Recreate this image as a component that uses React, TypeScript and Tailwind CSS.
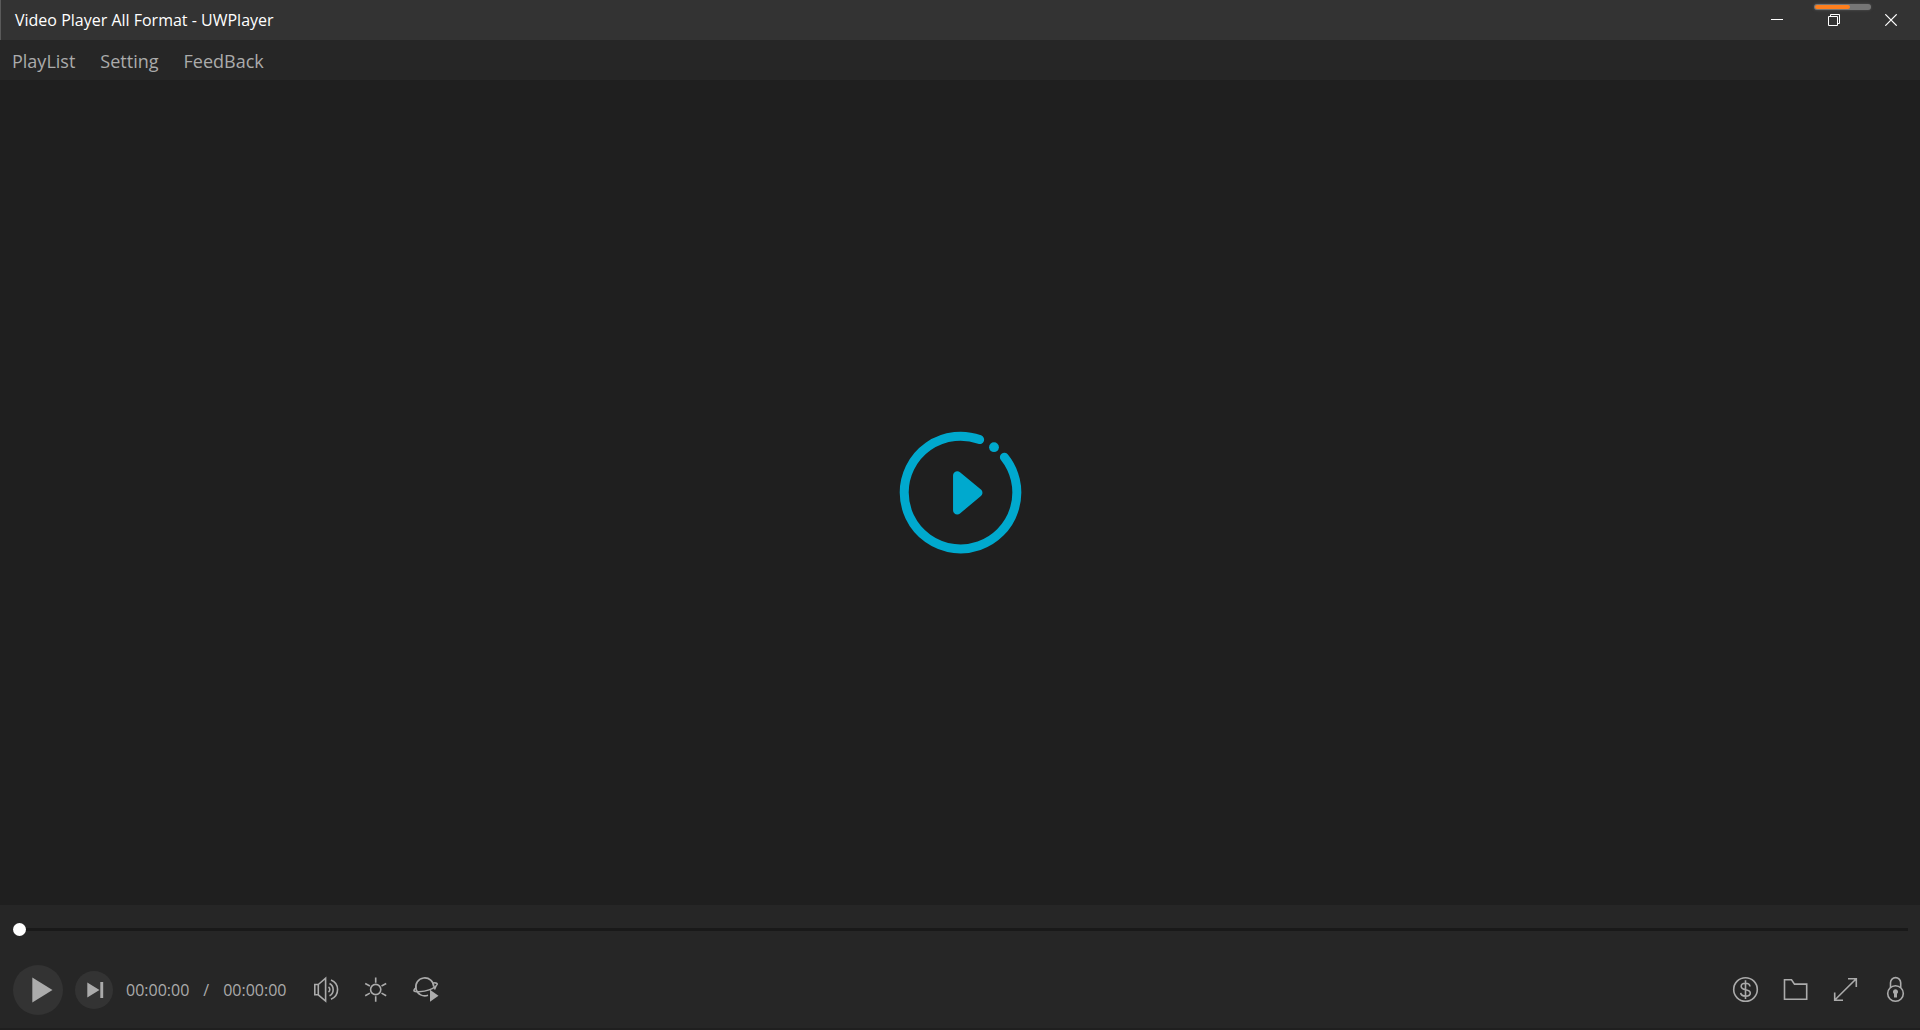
import React from 'react';

interface IconButtonProps {
  label: string;
  children: React.ReactNode;
}

const menuItems = ['PlayList', 'Setting', 'FeedBack'];

const WindowButton: React.FC<IconButtonProps> = ({ label, children }) => (
  <button aria-label={label} className="flex h-10 w-[57px] items-center justify-center text-white hover:bg-white/10">
    <svg width="13" height="12" viewBox="0 0 13 12" fill="none" stroke="currentColor">
      {children}
    </svg>
  </button>
);

const ToolButton: React.FC<IconButtonProps> = ({ label, children }) => (
  <button aria-label={label} className="flex h-[50px] w-[50px] items-center justify-center hover:text-white">
    <svg width="30" height="30" viewBox="0 0 30 30" fill="none" stroke="currentColor" strokeWidth="1.6">
      {children}
    </svg>
  </button>
);

const TitleBar = () => (
  <header className="relative flex h-10 items-center justify-between border-l border-[#5a5a5a] bg-[#333333]">
    <h1 className="pl-[14px] text-base leading-5 text-white">Video Player All Format - UWPlayer</h1>
    <div className="flex">
      <WindowButton label="Minimize">
        <path d="M0 5.5h12" />
      </WindowButton>
      <WindowButton label="Restore">
        <path d="M0.5 2.5h9v9h-9zM2.5 2.5v-2h9v9h-2" />
      </WindowButton>
      <WindowButton label="Close">
        <path d="M0.3 0.3l11.4 11.4M11.7 0.3L0.3 11.7" strokeWidth="1.2" />
      </WindowButton>
    </div>
    {/* Small loading bar floating over the window buttons */}
    <div className="absolute top-1 right-[49px] h-[6px] w-[57px] rounded-full bg-[#767676] p-px shadow-[0_0_3px_#555]">
      <div className="h-1 w-[35px] rounded-full bg-[#ff7f1e]" />
    </div>
  </header>
);

const MenuBar = () => (
  <nav className="flex h-10 items-center gap-[25px] bg-[#262626] px-3 pt-[2px]">
    {menuItems.map((item) => (
      <button key={item} className="text-lg leading-6 text-[#ababab] hover:text-white">
        {item}
      </button>
    ))}
  </nav>
);

const Stage = () => (
  <main className="flex flex-1 items-center justify-center">
    <button aria-label="Open video" className="text-[#00a9ce]">
      <svg width="122" height="121" viewBox="0 0 122 121" fill="none" className="overflow-visible">
        <path
          d="M80.6 7.6A56.3 56.3 0 1 0 105.4 25.3"
          stroke="currentColor"
          strokeWidth="9"
          strokeLinecap="round"
        />
        <circle cx="95" cy="15.2" r="4.9" fill="currentColor" />
        <path
          d="M58.3 43.5v34.7L79.2 60.8z"
          fill="currentColor"
          stroke="currentColor"
          strokeWidth="8.5"
          strokeLinejoin="round"
        />
      </svg>
    </button>
  </main>
);

const Controls = () => (
  <footer className="border-b-2 border-[#1f1f1f] bg-[#262626] text-[#ababab]">
    <div className="flex h-[49px] items-center pr-3 pl-[13px]">
      <input
        type="range"
        aria-label="Seek"
        min={0}
        max={100}
        defaultValue={0}
        className="h-[13px] w-full appearance-none bg-transparent [&::-webkit-slider-runnable-track]:h-[3px] [&::-webkit-slider-runnable-track]:bg-[#191919] [&::-webkit-slider-thumb]:-mt-[5px] [&::-webkit-slider-thumb]:h-[13px] [&::-webkit-slider-thumb]:w-[13px] [&::-webkit-slider-thumb]:appearance-none [&::-webkit-slider-thumb]:rounded-full [&::-webkit-slider-thumb]:bg-white"
      />
    </div>

    <div className="flex h-[74px] items-center justify-between pb-[2px] pl-[13px]">
      <div className="flex items-center">
        <button aria-label="Play" className="flex h-[50px] w-[50px] items-center justify-center rounded-full bg-[#333333]">
          <svg width="50" height="50" viewBox="0 0 50 50" fill="currentColor">
            <path d="M19.3 12.5l20.2 12.5-20.2 12.5z" />
          </svg>
        </button>
        <button aria-label="Next" className="ml-3 flex h-[38px] w-[38px] items-center justify-center rounded-full bg-[#333333]">
          <svg width="38" height="38" viewBox="0 0 38 38" fill="currentColor">
            <path d="M12.3 11.5L24.5 19l-12.2 7.5zM25.3 11h2.9v16h-2.9z" />
          </svg>
        </button>
        <div className="ml-[13px] flex w-[175px] items-center text-base leading-6">
          <time>00:00:00</time>
          <span className="px-[14px]">/</span>
          <time>00:00:00</time>
        </div>
        <ToolButton label="Volume">
          <path d="M3.8 9.5h3.5v10.3H3.8zM7.3 9.5l7.3-6.3v22.9l-7.3-6.3" />
          <path d="M17.5 12a3.2 3.2 0 0 1 0 5.2M18.5 8.5a7 7 0 0 1 0 12.3M20 5a10.3 10.3 0 0 1 0 19.2" />
        </ToolButton>
        <ToolButton label="Brightness">
          <circle cx="14.7" cy="14.5" r="5.1" />
          <path d="M14.7 2.5v5.2M14.7 21.3v5.5M4.2 8.5l4.7 2.5M25.2 8.5l-4.7 2.5M4.2 20.7l4.7-2.6M25.2 20.7l-4.7-2.6" />
        </ToolButton>
        <ToolButton label="360 view">
          <path d="M17 20.3A9 9 0 1 1 22.8 11.8" />
          <path d="M5.2 12.7C1.5 15.8 2.3 17 8 16.7C14.5 16.3 22 13.8 25 11C27.3 8.8 26.5 7.6 22.3 7.7M25 11l-1.5 3.5" />
          <path d="M19 14.7l8.5 6-8.5 6z" fill="currentColor" stroke="none" />
        </ToolButton>
      </div>

      <div className="flex">
        <ToolButton label="Purchase">
          <circle cx="15.5" cy="14.5" r="11.8" />
          <path d="M20 11.5c-.2-2-1.9-3.2-4.5-3.2s-4.3 1.2-4.3 3.1c0 4.5 9.1 2.3 9.1 6.5 0 2-2 3.2-4.8 3.2s-4.6-1.2-4.8-3.2M15.5 5.3v18.7" />
        </ToolButton>
        <ToolButton label="Open folder">
          <path d="M4.5 24.3V4.8h7l3 4.3h12.2v15.2z" />
        </ToolButton>
        <ToolButton label="Full screen">
          <path d="M4.8 25L26 4M18 3.8h8.3V12M4.7 17.5v7.7h8.3" />
        </ToolButton>
        <ToolButton label="Lock">
          <circle cx="15.5" cy="18.5" r="7.8" />
          <path d="M10.5 12.5V7.7a5.1 5.1 0 0 1 10.2 0v4.8" />
          <path d="M15.5 14.3a2.6 2.6 0 0 1 1.5 4.7v3.5h-3v-3.5a2.6 2.6 0 0 1 1.5-4.7z" fill="currentColor" stroke="none" />
        </ToolButton>
      </div>
    </div>
  </footer>
);

const App: React.FC = () => {
  return (
    <div className="flex min-h-screen flex-col bg-[#1f1f1f] font-['Open_Sans','Noto_Sans',sans-serif]">
      <TitleBar />
      <MenuBar />
      <Stage />
      <Controls />
    </div>
  );
};

export default App;
